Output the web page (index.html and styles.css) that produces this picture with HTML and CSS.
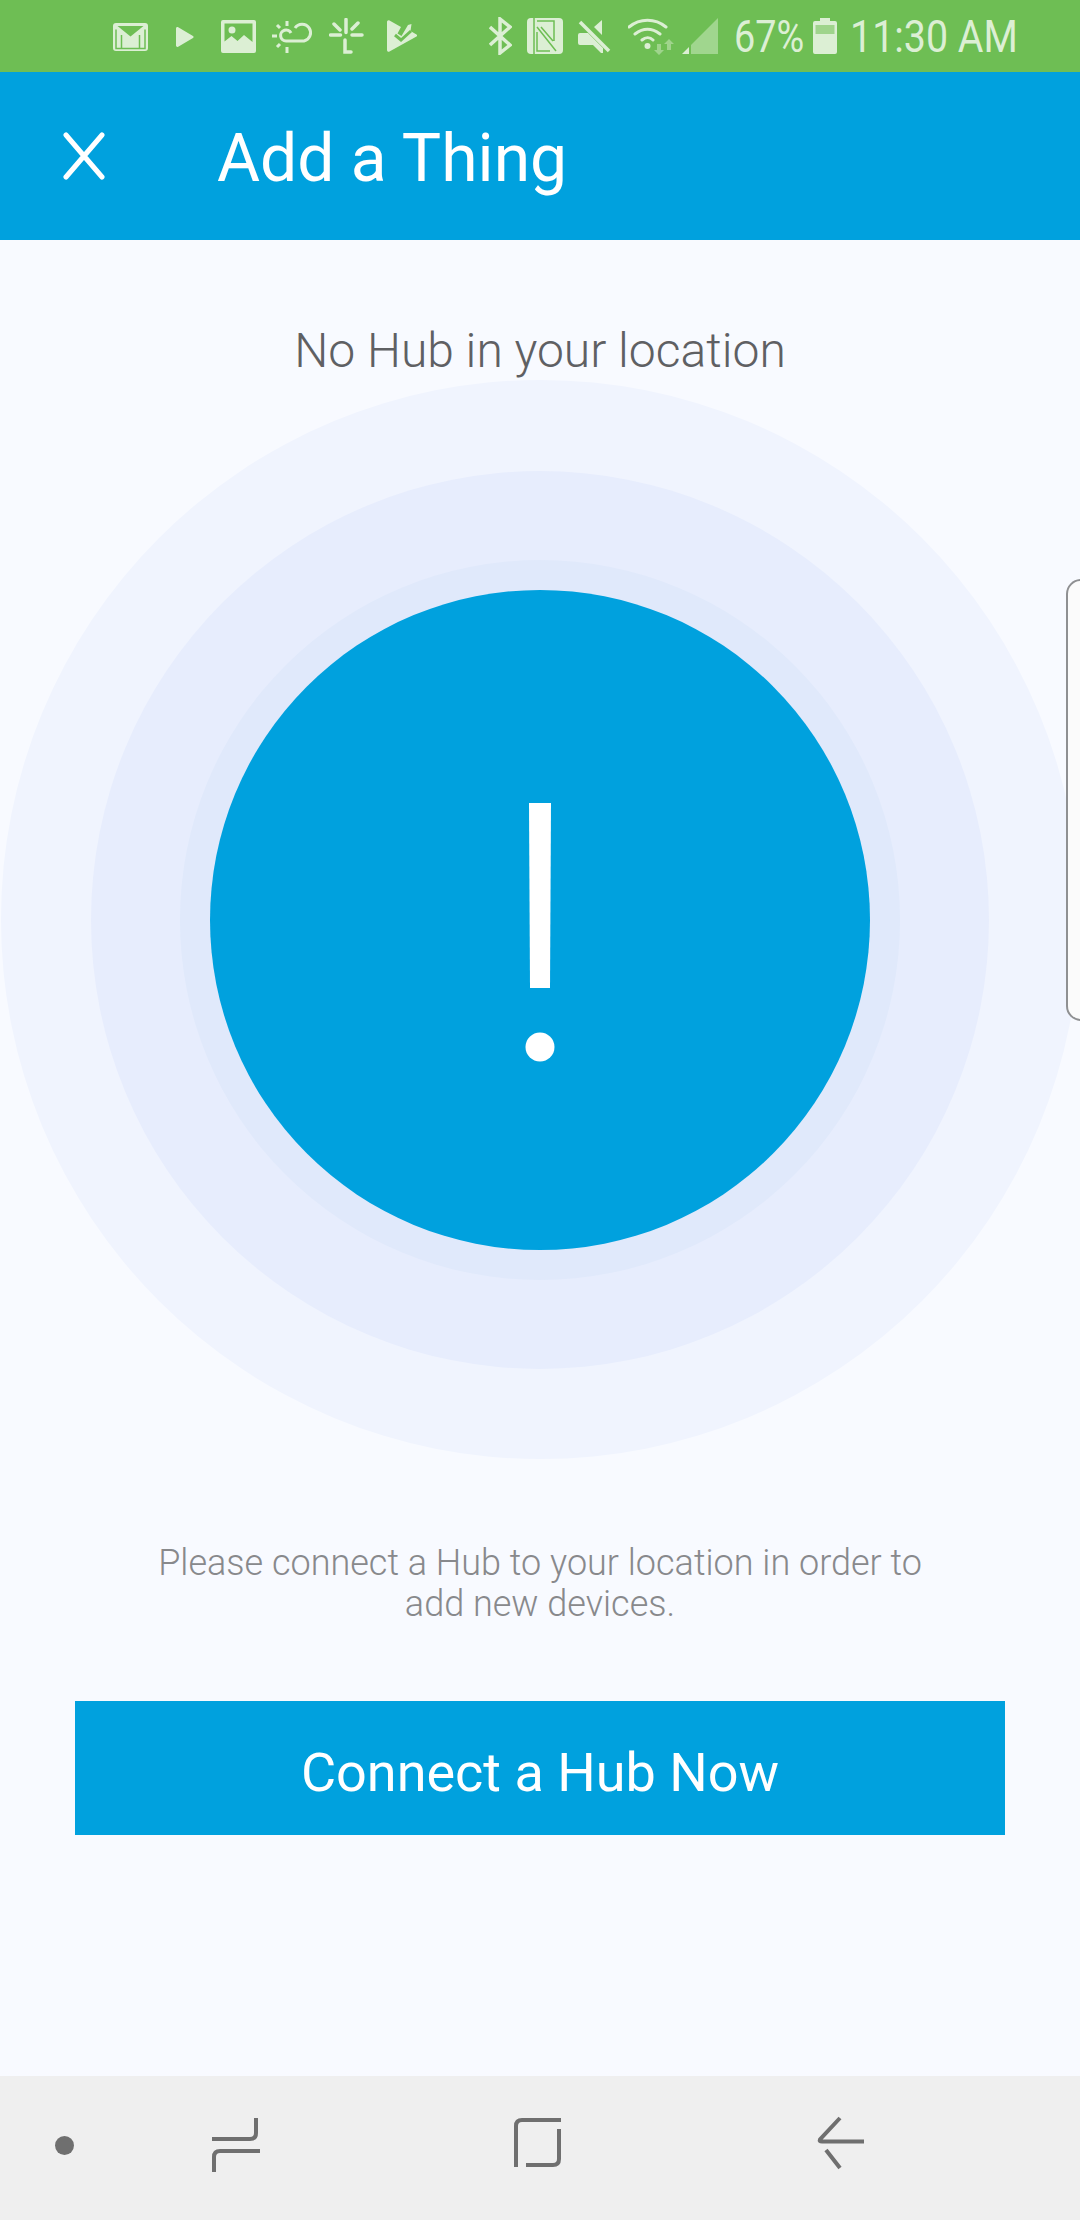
FILE: index.html
```html
<!DOCTYPE html>
<html lang="en">
<head>
<meta charset="utf-8">
<title>Add a Thing</title>
<link rel="stylesheet" href="styles.css">
</head>
<body>
<div class="page">
  <header class="status">
    <div class="status-left">
      <svg class="ic i-gmail" viewBox="0 0 35 28"><rect width="35" height="28" rx="3"/><path fill="#6ebe54" d="M4.500 3h26L17.500 13.500z"/><path fill="none" stroke="#6ebe54" stroke-width="1.500" d="M3 6.500V25.500h29V6.500M8.500 12v13.500M26.500 12v13.500"/></svg>
      <svg class="ic i-play" viewBox="0 0 18 20"><path d="M0 1.500C0 .3 1.200-.3 2.200.3L17 9c.8.500.8 1.500 0 2L2.200 19.700C1.200 20.300 0 19.700 0 18.500z"/></svg>
      <svg class="ic i-gallery" viewBox="0 0 35 33"><path fill-rule="evenodd" d="M2 0h31a2 2 0 0 1 2 2v29a2 2 0 0 1-2 2H2a2 2 0 0 1-2-2V2a2 2 0 0 1 2-2zM3.500 3.500v18l7-5.500 6 5 6.500-6 8.500 7V3.500zM11 6.500a3.500 3.500 0 1 1 0 7 3.500 3.500 0 0 1 0-7z"/></svg>
      <svg class="ic i-weather" viewBox="0 0 42 33"><g fill="none" stroke="#dcefd4" stroke-width="3"><path d="M14 21h18a8.500 8.500 0 1 0-9-13 M14 21a5.500 5.500 0 1 1 5-8"/><path d="M15 1v5M15 27v6M0 16h5M5 5l3 3M5 27l3-3"/></g></svg>
      <svg class="ic i-sprout" viewBox="0 0 35 36"><g fill="none" stroke="#dcefd4" stroke-width="3.500" stroke-linecap="round"><path d="M17 1.500v13M5 6l6 6M29 5l-6 6M1.500 17h10M23 17h10M16 22v12h6"/></g></svg>
      <svg class="ic i-check" viewBox="0 0 30 32"><path fill-rule="evenodd" d="M0 2c0-1.500 1.300-2.300 2.500-1.600L14 7l-3.500 6.500 4 2.500L21 5l3.500-1-1 7 6 3.500c.7.500.7 1.500 0 2L2.500 31.600C1.300 32.300 0 31.500 0 30z"/><path fill="none" stroke="#6ebe54" stroke-width="3" d="M8 15l6 5 10-9"/></svg>
    </div>
    <div class="status-right">
      <svg class="ic i-bt" viewBox="0 0 23 38"><path fill="none" stroke="#dcefd4" stroke-width="3.500" d="M1 10l20 18-10 8V2l10 8L1 28"/></svg>
      <svg class="ic i-nfc" viewBox="0 0 36 36"><rect width="36" height="36" rx="4"/><path fill="none" stroke="#6ebe54" stroke-width="1.500" d="M7 -1v38M10 3h17v20M10 9l19 24M10 14v19h13M14 9l12 14"/></svg>
      <svg class="ic i-mute" viewBox="0 0 33 33"><path d="M0 15a2 2 0 0 1 2-2h8l15 15v5l-2 0-8-8H2a2 2 0 0 1-2-2zM24 0v15l-8-8z"/><path stroke="#dcefd4" stroke-width="3.500" d="M2 2l29 29"/></svg>
      <svg class="ic i-wifi" viewBox="0 0 50 37"><g fill="none" stroke="#dcefd4" stroke-width="3" stroke-linecap="round"><path d="M1 9c11-9 26-9 37 0M7 16c8-6 17-6 25 0M14 22c3.500-3 8-3 11 0"/></g><circle cx="19.500" cy="28" r="3" fill="#dcefd4"/><path fill="#9fd48c" d="M29 26h4v6h3l-5 5-5-5h3zM41 21l5 5h-3v6h-4v-6h-3z"/></svg>
      <svg class="ic i-signal" viewBox="0 0 36 36"><path fill="#a0d68e" d="M9 36V27L36 0v36z"/><path fill="#dcefd4" d="M7 29v7H0z"/></svg>
      <span class="status-text pct">67%</span>
      <svg class="ic i-batt" viewBox="0 0 24 36"><path d="M7 0h10v3h5a2 2 0 0 1 2 2v29a2 2 0 0 1-2 2H2a2 2 0 0 1-2-2V5a2 2 0 0 1 2-2h5z"/><rect fill="#9fd48c" x="2.500" y="7" width="19" height="9"/></svg>
      <span class="status-text time">11:30 AM</span>
    </div>
  </header>

  <header class="appbar">
    <svg class="close" viewBox="0 0 42 48"><path fill="none" stroke="#fff" stroke-width="5" stroke-linecap="round" d="M3 3l36 42M39 3L3 45"/></svg>
    <h1 class="appbar-title">Add a Thing</h1>
  </header>

  <main class="content">
    <h2 class="headline">No Hub in your location</h2>
    <div class="ring ring-outer">
      <div class="ring ring-mid">
        <div class="ring ring-inner">
          <div class="ring ring-core">
            <svg class="bang" viewBox="0 0 30 260"><path fill="#fff" d="M4 0h22l-1 185H5z"/><circle cx="15" cy="244" r="14.500" fill="#fff"/></svg>
          </div>
        </div>
      </div>
    </div>
    <p class="message">Please connect a Hub to your location in order to<br>add new devices.</p>
    <button class="cta">Connect a Hub Now</button>
  </main>

  <nav class="navbar">
    <span class="nav-dot"></span>
    <svg class="nav-ic nav-recents" viewBox="0 0 50 56"><path fill="none" stroke="#6f6f6f" stroke-width="4" d="M0 23h38q6 0 6-6V2M48 35H8q-6 0-6 6v16"/></svg>
    <svg class="nav-ic nav-home" viewBox="0 0 50 56"><path fill="none" stroke="#6f6f6f" stroke-width="4" d="M47 4H8q-6 0-6 6v41M45 13v30q0 6-6 6H12"/></svg>
    <svg class="nav-ic nav-back" viewBox="0 0 50 56"><path fill="none" stroke="#6f6f6f" stroke-width="4" d="M23 2L3 23.500q-1 2 2 2h42M9 34l14 18"/></svg>
  </nav>

  <div class="edge-handle"></div>
</div>
</body>
</html>
```
FILE: styles.css
```css
* { box-sizing: border-box; }
html, body { margin: 0; padding: 0; }
body { font-family: Roboto, "Liberation Sans", sans-serif; background: #f8faff; }
.page { position: relative; width: 1080px; height: 2220px; display: flex; flex-direction: column; overflow: hidden; }

.status { height: 72px; flex: none; background: #6ebe54; display: flex; align-items: center; justify-content: space-between; padding: 0 65px 0 113px; }
.status-left, .status-right { display: flex; align-items: center; }
.ic { display: block; flex: none; fill: #dcefd4; }
.i-gmail { width: 35px; height: 28px; margin-top: 2px; }
.i-play { width: 18px; height: 20px; margin-left: 28px; margin-top: 2px; }
.i-gallery { width: 35px; height: 33px; margin-left: 27px; }
.i-weather { width: 42px; height: 33px; margin-left: 16px; }
.i-sprout { width: 35px; height: 36px; margin-left: 15px; }
.i-check { width: 30px; height: 32px; margin-left: 23px; }
.i-bt { width: 23px; height: 38px; }
.i-nfc { width: 36px; height: 36px; margin-left: 15px; }
.i-mute { width: 33px; height: 33px; margin-left: 15px; }
.i-wifi { width: 50px; height: 37px; margin-left: 17px; }
.i-signal { width: 36px; height: 36px; margin-left: 4px; }
.i-batt { width: 24px; height: 36px; margin-left: 10px; }
.status-text { color: #dcefd4; font-size: 44px; line-height: 72px; white-space: nowrap; display: inline-block; transform-origin: left center; position: relative; top: 1px; }
.pct { width: 69px; margin-left: 16px; transform: scaleX(.86); }
.time { width: 165px; margin-left: 13px; transform: scaleX(.895); }

.appbar { height: 168px; flex: none; background: #00a1de; display: flex; align-items: center; padding-left: 63px; }
.close { width: 42px; height: 48px; flex: none; }
.appbar-title { margin: 6px 0 0 112px; color: #fff; font-weight: 400; font-size: 66px; line-height: 76px; }

.content { flex: 1; display: flex; flex-direction: column; align-items: center; }
.headline { margin: 0; padding-top: 82px; height: 140px; color: #5f6063; font-weight: 300; font-size: 48px; line-height: 57px; }
.ring { border-radius: 50%; display: flex; align-items: center; justify-content: center; flex: none; }
.ring-outer { width: 1079px; height: 1079px; background: #f0f4fe; }
.ring-mid { width: 898px; height: 898px; background: #e7edfd; }
.ring-inner { width: 720px; height: 720px; background: #e0e9fb; }
.ring-core { width: 660px; height: 660px; background: #00a1de; }
.bang { width: 30px; height: 260px; display: block; margin-top: 26px; }
.message { margin: 84px 0 0; color: #88898c; font-weight: 300; font-size: 36px; line-height: 41px; text-align: center; }
.cta { margin-top: 76px; width: 930px; height: 134px; border: 0; border-radius: 0; background: #00a1de; color: #fff; font-family: inherit; font-size: 54px; font-weight: 400; padding-top: 9px; }

.navbar { height: 144px; flex: none; background: #efefef; position: relative; }
.nav-dot { position: absolute; left: 55px; top: 60px; width: 19px; height: 19px; border-radius: 50%; background: #6f6f6f; }
.nav-ic { position: absolute; width: 50px; height: 56px; top: 40px; }
.nav-recents { left: 212px; }
.nav-home { left: 514px; }
.nav-back { left: 817px; }

.edge-handle { position: absolute; left: 1066px; top: 579px; width: 30px; height: 442px; border: 2px solid #8f9092; border-radius: 18px; background: #fbfbfb; }
```
